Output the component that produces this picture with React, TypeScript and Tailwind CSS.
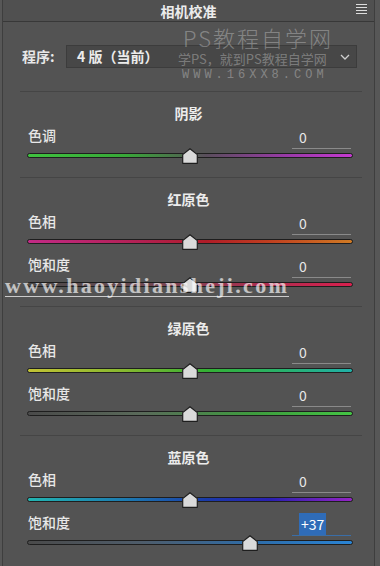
import React from 'react';

type Slider = {
    label: string;
    value: number;
    track: string;
    active?: boolean;
};

type Section = {
    title: string;
    sliders: Slider[];
};

const sections: Section[] = [
    {
        title: '阴影',
        sliders: [
            { label: '色调', value: 0, track: 'bg-[linear-gradient(to_right,#3fc23f_0%,#38a838_30%,#4e6a4e_48%,#5a4e5c_55%,#9a3aa8_80%,#c43ad0_100%)]' },
        ],
    },
    {
        title: '红原色',
        sliders: [
            { label: '色相', value: 0, track: 'bg-[linear-gradient(to_right,#c22a86_0%,#b22052_35%,#b01c28_55%,#c04020_75%,#d07a24_100%)]' },
            { label: '饱和度', value: 0, track: 'bg-[linear-gradient(to_right,#4a4a4a_0%,#6a4a52_35%,#a83050_70%,#d8204e_100%)]' },
        ],
    },
    {
        title: '绿原色',
        sliders: [
            { label: '色相', value: 0, track: 'bg-[linear-gradient(to_right,#c2c234_0%,#86b830_30%,#34b034_55%,#28b070_80%,#20b0a8_100%)]' },
            { label: '饱和度', value: 0, track: 'bg-[linear-gradient(to_right,#4a4a4a_0%,#5a6a5a_35%,#3e9c3e_70%,#44c444_100%)]' },
        ],
    },
    {
        title: '蓝原色',
        sliders: [
            { label: '色相', value: 0, track: 'bg-[linear-gradient(to_right,#22b4b0_0%,#1c7ab0_30%,#1a3aa8_55%,#2a20b0_75%,#9424c4_100%)]' },
            { label: '饱和度', value: 37, active: true, track: 'bg-[linear-gradient(to_right,#4a4a4a_0%,#4e5c6a_35%,#2e6ca8_70%,#2a84d4_100%)]' },
        ],
    },
];

const Thumb = ({ value }: { value: number }) => (
    <div
        className="absolute top-[3px] -ml-[8px] w-[16px] h-[16px]"
        style={{ left: `${50 + value / 2}%` }}
    >
        <svg width="16" height="16" viewBox="0 0 16 16">
            <path
                d="M8 0.7 L15.3 6.6 L15.3 15.3 L0.7 15.3 L0.7 6.6 Z"
                fill="#dadada"
                stroke="#1e1e1e"
                strokeWidth="1.2"
                strokeLinejoin="round"
            />
        </svg>
    </div>
);

const SliderRow = ({ slider, first }: { slider: Slider; first: boolean }) => (
    <div className={first ? '' : 'mt-[3px]'}>
        <div className="h-[20px] flex items-start justify-between ml-[25px] mr-[23px]">
            <span className="text-[14px] leading-[20px] font-medium text-[#e8e8e8]">{slider.label}</span>
            <div
                className={`w-[59px] h-[23px] mt-[1px] border-b pl-[7px] text-[14px] leading-[22px] ${
                    slider.active ? 'border-[#3a6ea8]' : 'border-[#8a8a8a]'
                }`}
            >
                {slider.active ? (
                    <span className="bg-[#2f6cb8] text-white px-[2px] py-[1px]">+{slider.value}</span>
                ) : (
                    <span className="text-[#e8e8e8]">{slider.value}</span>
                )}
            </div>
        </div>
        <div className="relative h-[20px] ml-[24px] mr-[21px]">
            <div className={`absolute left-0 right-0 top-[8px] h-[5px] rounded-full border border-[#1e1e1e] ${slider.track}`} />
            <Thumb value={slider.value} />
        </div>
    </div>
);

const Divider = () => <div className="h-px ml-[17px] mr-[12px] bg-[#454545]" />;

export default function App() {
    return (
        <div
            className="relative w-[380px] h-[566px] overflow-hidden bg-[#575757]"
            style={{ fontFamily: '"Noto Sans CJK SC", "Noto Sans", sans-serif' }}
        >
            <div className="ml-[2px] w-[373px] h-full bg-[#535353] border-x border-[#3e3e3e]">
                {/* Header */}
                <div className="relative h-[22px] border-b border-[#383838] bg-[#505050] flex items-center justify-center">
                    <span className="text-[14px] font-bold text-[#ececec] leading-none">相机校准</span>
                    <div className="absolute right-[7px] top-[4px] flex flex-col gap-[2px]">
                        <span className="block w-[11px] h-px bg-[#dddddd]" />
                        <span className="block w-[11px] h-px bg-[#dddddd]" />
                        <span className="block w-[11px] h-px bg-[#dddddd]" />
                        <span className="block w-[11px] h-px bg-[#dddddd]" />
                    </div>
                </div>

                {/* Process */}
                <div className="mt-[23px] h-[23px] flex items-center pl-[19px] pr-[17px]">
                    <span className="text-[14px] font-bold text-[#e8e8e8] w-[44px]">程序:</span>
                    <div className="flex-1 h-[23px] bg-[#474747] border border-[#3c3c3c] flex items-center justify-between pl-[10px] pr-[6px]">
                        <span className="text-[14px] font-bold text-[#ececec]">4 版（当前）</span>
                        <svg width="10" height="6" viewBox="0 0 10 6">
                            <path d="M1 1 L5 5 L9 1" fill="none" stroke="#d0d0d0" strokeWidth="1.3" />
                        </svg>
                    </div>
                </div>
                <div className="mt-[23px]" />

                {sections.map((section) => (
                    <div key={section.title}>
                        <Divider />
                        <div className="pt-[13px] pb-[4px] h-[33px] text-center text-[14px] leading-[16px] font-bold text-[#ececec]">
                            {section.title}
                        </div>
                        {section.sliders.map((s, i) => (
                            <SliderRow key={s.label} slider={s} first={i === 0} />
                        ))}
                        <div className="h-[12px]" />
                    </div>
                ))}
            </div>

            {/* Watermarks */}
            <div className="absolute left-[183px] top-[26px] text-[22px] leading-[23px] font-light tracking-[2px] text-white/30 pointer-events-none">
                PS教程自学网
            </div>
            <div className="absolute left-[178px] top-[51px] text-[13px] leading-[16px] text-white/30 pointer-events-none">
                学PS，就到PS教程自学网
            </div>
            <div
                className="absolute left-[182px] top-[68px] text-[12px] leading-[14px] tracking-[4px] text-white/30 pointer-events-none"
                style={{ fontFamily: '"Liberation Mono", monospace' }}
            >
                WWW.16XX8.COM
            </div>
            <div
                className="absolute left-[5px] top-[276px] text-[22px] leading-[20px] font-bold text-white/65 border-b border-white/70 pointer-events-none"
                style={{ fontFamily: '"Liberation Serif", serif', letterSpacing: '2.3px' }}
            >
                www.haoyidiansheji.com
            </div>
        </div>
    );
}
